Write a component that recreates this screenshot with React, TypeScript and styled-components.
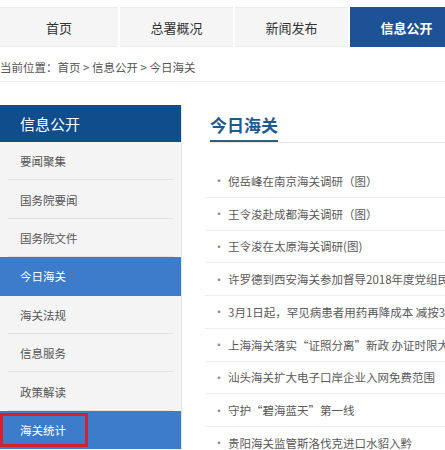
import styled, { createGlobalStyle } from 'styled-components';

const GlobalStyle = createGlobalStyle`
  html, body {
    margin: 0;
    padding: 0;
    background: #fff;
    overflow: hidden;
  }
  body {
    font-family: "Noto Sans CJK SC", "Noto Sans", sans-serif;
  }
`;

const Page = styled.div`
  width: 600px;
`;

const Nav = styled.nav`
  display: flex;
  gap: 2px;
  margin-top: 7px;
  height: 40px;
  background: #fff;
`;

const Tab = styled.div<{ $active?: boolean; $width: number }>`
  width: ${(p) => p.$width}px;
  flex: none;
  display: flex;
  align-items: center;
  justify-content: center;
  font-size: 13px;
  font-weight: ${(p) => (p.$active ? 700 : 400)};
  color: ${(p) => (p.$active ? '#fff' : '#333')};
  background: ${(p) => (p.$active ? '#1d5296' : '#f5f5f5')};
  border-top: 1px solid ${(p) => (p.$active ? '#1d5296' : '#ececec')};
  border-bottom: 1px solid ${(p) => (p.$active ? '#1d5296' : '#ececec')};
  box-sizing: border-box;
`;

const Breadcrumb = styled.div`
  height: 35px;
  box-sizing: border-box;
  padding-top: 12px;
  font-size: 11.5px;
  color: #555;
  border-bottom: 1px solid #ececec;
  white-space: nowrap;
`;

const Main = styled.div`
  display: flex;
  margin-top: 23px;
`;

const Sidebar = styled.aside`
  width: 182px;
  flex: none;
  background: #f4f4f4;
  border-right: 1px solid #e4e4e4;
  box-sizing: border-box;
`;

const SideHeader = styled.div`
  height: 37px;
  display: flex;
  align-items: center;
  padding-left: 20px;
  background: #0f4d8c;
  color: #fff;
  font-size: 15px;
`;

const SideItem = styled.div<{ $active?: boolean }>`
  position: relative;
  height: 38.4px;
  display: flex;
  align-items: center;
  padding-left: ${(p) => (p.$active ? 0 : 20)}px;
  font-size: 11.5px;
  color: ${(p) => (p.$active ? '#fff' : '#555')};
  background: ${(p) => (p.$active ? '#3c7ccb' : 'transparent')};
  box-sizing: border-box;

  &::after {
    content: '';
    display: ${(p) => (p.$active ? 'none' : 'block')};
    position: absolute;
    left: 8px;
    right: 8px;
    bottom: 0;
    height: 1px;
    background: #e2e2e2;
  }
`;

const ActiveLabel = styled.span<{ $marked?: boolean }>`
  display: flex;
  align-items: center;
  height: 34px;
  width: 88px;
  box-sizing: border-box;
  padding-left: ${(p) => (p.$marked ? 17 : 20)}px;
  border: ${(p) => (p.$marked ? '3px solid #d51f2b' : 'none')};
`;

const Content = styled.section`
  flex: 1;
  padding-left: 23px;
`;

const TitleBar = styled.div`
  height: 37px;
  border-bottom: 1px solid #e6e6e6;
  margin-left: 5px;
  display: flex;
`;

const Title = styled.h2`
  margin: 0;
  padding-top: 7px;
  font-size: 17px;
  font-weight: 700;
  color: #1d5b8f;
  border-bottom: 2px solid #2d5f83;
  margin-bottom: -1px;
  height: 100%;
  box-sizing: border-box;
`;

const List = styled.ul`
  list-style: none;
  margin: 22px 0 0;
  padding: 0;
`;

const Row = styled.li`
  height: 32.75px;
  display: flex;
  align-items: center;
  gap: 3px;
  padding-left: 8px;
  border-bottom: 1px solid #eeeeee;
  box-sizing: border-box;
  font-size: 11.5px;
  color: #595959;
  white-space: nowrap;

  &::before {
    content: '•';
    color: #8a8a8a;
    font-size: 12px;
  }
`;

const tabs = [
  { label: '首页', width: 118 },
  { label: '总署概况', width: 113 },
  { label: '新闻发布', width: 113 },
  { label: '信息公开', width: 113, active: true },
];

const sideItems = [
  { label: '要闻聚集' },
  { label: '国务院要闻' },
  { label: '国务院文件' },
  { label: '今日海关', active: true },
  { label: '海关法规' },
  { label: '信息服务' },
  { label: '政策解读' },
  { label: '海关统计', active: true, marked: true },
];

const news = [
  '倪岳峰在南京海关调研（图）',
  '王令浚赴成都海关调研（图）',
  '王令浚在太原海关调研(图)',
  '许罗德到西安海关参加督导2018年度党组民主生活会',
  '3月1日起，罕见病患者用药再降成本 减按3%征收增值税',
  '上海海关落实“证照分离”新政 办证时限大幅压缩',
  '汕头海关扩大电子口岸企业入网免费范围',
  '守护“碧海蓝天”第一线',
  '贵阳海关监管斯洛伐克进口水貂入黔',
];

export default function App() {
  return (
    <Page>
      <GlobalStyle />
      <Nav>
        {tabs.map((t) => (
          <Tab key={t.label} $width={t.width} $active={t.active}>
            {t.label}
          </Tab>
        ))}
      </Nav>
      <Breadcrumb>当前位置：首页 &gt; 信息公开 &gt; 今日海关</Breadcrumb>
      <Main>
        <Sidebar>
          <SideHeader>信息公开</SideHeader>
          {sideItems.map((item) => (
            <SideItem key={item.label} $active={item.active}>
              {item.active ? (
                <ActiveLabel $marked={item.marked}>{item.label}</ActiveLabel>
              ) : (
                item.label
              )}
            </SideItem>
          ))}
        </Sidebar>
        <Content>
          <TitleBar>
            <Title>今日海关</Title>
          </TitleBar>
          <List>
            {news.map((n) => (
              <Row key={n}>{n}</Row>
            ))}
          </List>
        </Content>
      </Main>
    </Page>
  );
}
